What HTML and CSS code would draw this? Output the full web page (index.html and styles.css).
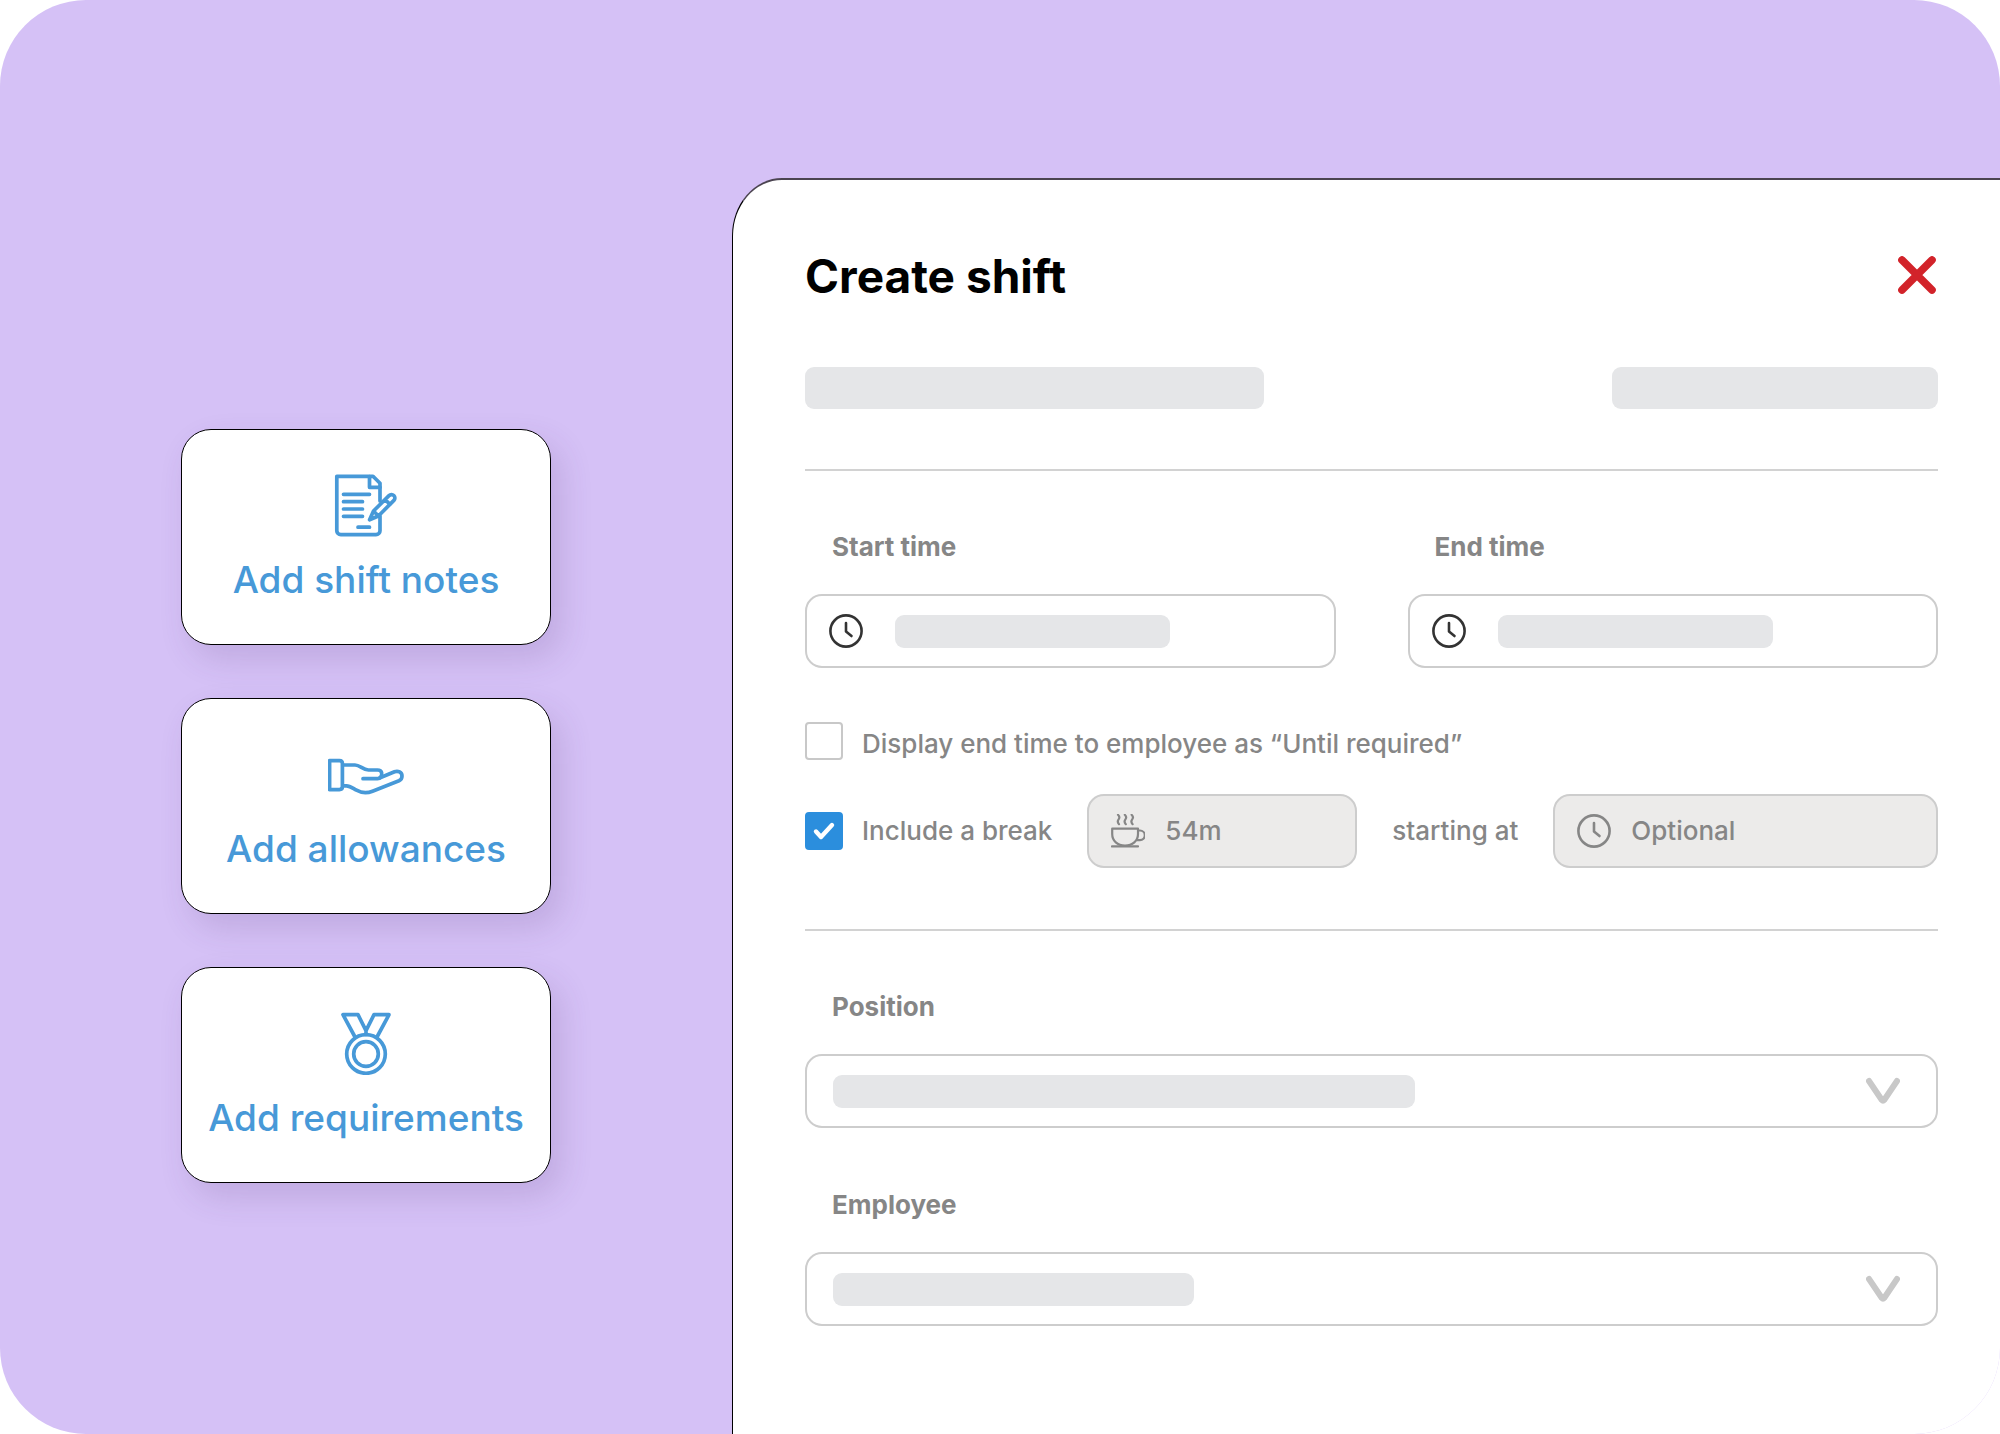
FILE: index.html
```html
<!DOCTYPE html>
<html lang="en">
<head>
  <meta charset="UTF-8" />
  <meta name="viewport" content="width=device-width, initial-scale=1" />
  <title>Create shift</title>
  <link rel="stylesheet" href="styles.css">
</head>
<body>
  <main class="scene">
    <!-- Shortcut cards -->
    <div class="shortcuts">
      <button type="button" class="card">
        <svg class="card-icon" width="64" height="64" viewBox="0 0 64 64">
          <path d="M46 28V10.3L39 3.3H2.8V57.7a4 4 0 0 0 4 4H42a4 4 0 0 0 4-4V43" />
          <path d="M35.5 3.5V14.3H46" />
          <path d="M9.5 21.3H35.5M9.5 28.7H28.5M9.5 36H28.5M9.5 43.3H28.5M24 54.2H35.5" />
          <path d="M55 22.6L39.5 38L35.6 46.8L44.4 43L59.9 27.4A3.4 3.4 0 0 0 55 22.6ZM39.5 38L44.4 43M51 26.5L56 31.4" />
        </svg>
        <span>Add shift notes</span>
      </button>

      <button type="button" class="card">
        <svg class="card-icon" width="76" height="64" viewBox="0 0 76 64">
          <path d="M1.6 18.6H11.4Q14.4 18.6 14.4 21.6V44.6Q14.4 47.6 11.4 47.6H1.6Z" />
          <path d="M15 23H27C32 23 35 28 40.5 28H49.5C54.5 28 54.5 33 52.5 35.2Q51.5 36.7 49.5 36.7H35" />
          <path d="M51.5 36L66.5 29.8C70 28.4 74 30.2 74 34Q74 37.4 71 38.8L44.5 49.2C39 51.4 33.5 51 28.5 48.2C24.5 46 22 43.8 18.5 43.8H15" />
        </svg>
        <span>Add allowances</span>
      </button>

      <button type="button" class="card">
        <svg class="card-icon" width="64" height="64" viewBox="0 0 64 64">
          <circle cx="32" cy="43" r="19.3" />
          <circle cx="32" cy="43" r="12.3" />
          <path d="M21 26L9 3.7H24L32 19.7L40 3.7H55L43 26M32 19.7V23.5" />
        </svg>
        <span>Add requirements</span>
      </button>
    </div>

    <!-- Shift form -->
    <form class="panel">
      <header class="panel-header">
        <h1>Create shift</h1>
        <button type="button" class="close" aria-label="Close">
          <svg width="40" height="40" viewBox="0 0 40 40">
            <path d="M4 4L34 34M34 4L4 34" />
          </svg>
        </button>
      </header>

      <div class="summary">
        <span class="bar bar-name"></span>
        <span class="bar bar-date"></span>
      </div>

      <hr>

      <div class="times">
        <div class="group">
          <label for="start">Start time</label>
          <div class="field">
            <svg class="clock" width="34" height="34" viewBox="0 0 34 34">
              <circle cx="17" cy="17" r="15.6" />
              <path d="M17 9V17.5L22.5 22" />
            </svg>
            <input id="start" class="bar bar-time" type="text">
          </div>
        </div>
        <div class="group">
          <label for="end">End time</label>
          <div class="field">
            <svg class="clock" width="34" height="34" viewBox="0 0 34 34">
              <circle cx="17" cy="17" r="15.6" />
              <path d="M17 9V17.5L22.5 22" />
            </svg>
            <input id="end" class="bar bar-time" type="text">
          </div>
        </div>
      </div>

      <div class="options">
        <label class="check check-low">
          <span class="box">
            <input type="checkbox">
          </span>
          Display end time to employee as “Until required”
        </label>

        <div class="break-row">
          <label class="check">
            <span class="box">
              <input type="checkbox" checked>
              <svg class="tick" width="38" height="38" viewBox="0 0 38 38">
                <path d="M11 19.5L16 25L27 13" />
              </svg>
            </span>
            Include a break
          </label>
          <div class="field muted break-length">
            <svg class="cup" width="34" height="34" viewBox="0 0 34 34">
              <path d="M1.2 14.7H27V20C27 27 21.5 31.5 14 31.5S1.2 27 1.2 20Z" />
              <path d="M27 16.5H29a4 4 0 0 1 0 9.6H26M1 32.4H27" />
              <path d="M7 .8Q9.4 3 7.6 5.4T8 10.2M13.8 .8Q16.2 3 14.4 5.4T14.8 10.2M20.6 .8Q23 3 21.2 5.4T21.6 10.2" />
            </svg>
            <input type="text" value="54m" aria-label="Break length">
          </div>
          <label for="break-start">starting at</label>
          <div class="field muted break-start">
            <svg class="clock" width="34" height="34" viewBox="0 0 34 34">
              <circle cx="17" cy="17" r="15.6" />
              <path d="M17 9V17.5L22.5 22" />
            </svg>
            <input id="break-start" type="text" placeholder="Optional">
          </div>
        </div>
      </div>

      <hr>

      <div class="people">
        <div class="group">
          <label for="position">Position</label>
          <div class="picker">
            <select id="position"><option></option></select>
            <span class="bar bar-position"></span>
            <svg class="chevron" width="34" height="28" viewBox="0 0 34 28">
              <path d="M3 4L16 23.2Q17 24.4 18 23.2L31 4" />
            </svg>
          </div>
        </div>
        <div class="group">
          <label for="employee">Employee</label>
          <div class="picker">
            <select id="employee"><option></option></select>
            <span class="bar bar-employee"></span>
            <svg class="chevron" width="34" height="28" viewBox="0 0 34 28">
              <path d="M3 4L16 23.2Q17 24.4 18 23.2L31 4" />
            </svg>
          </div>
        </div>
      </div>
    </form>
  </main>
</body>
</html>
```
FILE: styles.css
```css
* {
  box-sizing: border-box;
}

body {
  margin: 0;
  background: #fff;
  font-family: Inter, "Liberation Sans", sans-serif;
  font-size: 26px;
  font-variant-ligatures: none;
  line-height: 32px;
  color: #868686;
}

button,
input,
select {
  font: inherit;
  color: inherit;
}

svg {
  display: block;
  flex: none;
  fill: none;
  stroke: currentColor;
  stroke-linecap: round;
  stroke-linejoin: round;
}

.scene {
  display: grid;
  grid-template-columns: 36.6% 1fr;
  min-height: 100vh;
  padding-top: 178px;
  background: #d5c1f6;
  border-radius: 86px;
  overflow: hidden;
}

/* shortcut cards */
.shortcuts {
  display: flex;
  flex-direction: column;
  align-items: center;
  justify-content: center;
  gap: 53px;
}

.card {
  display: flex;
  flex-direction: column;
  align-items: center;
  gap: 20px;
  width: 370px;
  padding: 43px 0 41px;
  border: 1px solid #000;
  border-radius: 30px;
  background: #fff;
  box-shadow: 10px 14px 32px rgba(80, 50, 110, 0.16);
  color: #4799d8;
  font-size: 37px;
  font-weight: 500;
  font-variant-ligatures: none;
  line-height: 46px;
  cursor: pointer;
}

.card-icon {
  stroke-width: 3.7;
}

/* panel */
.panel {
  padding: 72px 62px 60px 72px;
  border-top: 2px solid #4b4450;
  border-left: 1px solid #000;
  border-top-left-radius: 50px 58px;
  background: #fff;
}

.panel-header {
  display: flex;
  align-items: center;
  justify-content: space-between;
  margin-bottom: 67px;
}

h1 {
  margin: 0;
  color: #000;
  font-size: 46px;
  font-weight: 700;
  line-height: 48px;
}

.close {
  padding: 0;
  border: none;
  background: none;
  color: #d2232a;
  cursor: pointer;
}

.close svg {
  stroke-width: 7.6;
}

.bar {
  display: block;
  height: 33px;
  border: none;
  border-radius: 9px;
  background: #e5e6e8;
}

.summary {
  display: flex;
  justify-content: space-between;
}

.summary .bar {
  height: 42px;
}

.bar-name {
  width: 459px;
}

.bar-date {
  width: 326px;
}

hr {
  height: 2px;
  margin: 60px 0;
  border: none;
  background: #d2d2d2;
}

.times {
  display: grid;
  grid-template-columns: 1fr 1fr;
  gap: 72px;
}

.group {
  display: flex;
  flex-direction: column;
  gap: 31px;
}

.group label {
  padding-left: 27px;
  font-weight: 700;
}

.field {
  display: flex;
  align-items: center;
  gap: 20px;
  height: 74px;
  padding: 0 22px;
  border: 2px solid #cdcdcd;
  border-radius: 17px;
}

.field input {
  min-width: 0;
  padding: 0;
  border: none;
}

.field .bar-time {
  width: 275px;
  margin-left: 12px;
}

.clock {
  color: #333;
  stroke-width: 2.6;
}

.cup {
  stroke-width: 2.2;
}

.muted {
  background: #ecebea;
  font-weight: 500;
}

.muted input {
  width: 100%;
  background: none;
}

.muted input::placeholder {
  color: inherit;
  opacity: 1;
}

.muted .clock {
  color: #868686;
}

/* checkboxes */
.options {
  display: flex;
  flex-direction: column;
  gap: 34px;
  margin-top: 54px;
  margin-bottom: 61px;
  font-weight: 500;
}

.check {
  display: flex;
  align-items: center;
  gap: 19px;
}

.check-low {
  align-items: flex-end;
}

.box {
  position: relative;
  width: 38px;
  height: 38px;
}

.box input {
  display: block;
  width: 38px;
  height: 38px;
  margin: 0;
  appearance: none;
  border: 2px solid #c8c8c8;
  border-radius: 4px;
  background: #fff;
}

.box input:checked {
  border-color: #2b8edd;
  background: #2b8edd;
}

.tick {
  position: absolute;
  top: 0;
  left: 0;
  color: #fff;
  stroke-width: 4.4;
  pointer-events: none;
}

.break-row {
  display: flex;
  align-items: center;
  gap: 35px;
}

.break-length {
  width: 270px;
}

.break-start {
  flex: 1;
}

/* drop-downs */
.people {
  display: flex;
  flex-direction: column;
  gap: 61px;
}

.picker {
  position: relative;
}

.picker select {
  display: block;
  width: 100%;
  height: 74px;
  appearance: none;
  border: 2px solid #cdcdcd;
  border-radius: 17px;
  background: #fff;
}

.picker .bar {
  position: absolute;
  top: 21px;
  left: 28px;
  pointer-events: none;
}

.bar-position {
  width: 582px;
}

.bar-employee {
  width: 361px;
}

.chevron {
  position: absolute;
  top: 23px;
  right: 38px;
  color: #c8c8c8;
  stroke-width: 6;
  pointer-events: none;
}
```
